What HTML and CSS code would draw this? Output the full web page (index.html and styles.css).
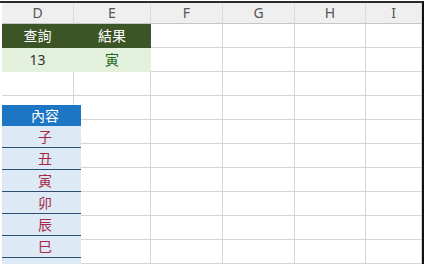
FILE: index.html
```html
<!DOCTYPE html>
<html lang="zh-Hant">
<head>
    <meta charset="UTF-8">
    <meta name="viewport" content="width=device-width, initial-scale=1.0">
    <title>地支查詢</title>
    <link rel="stylesheet" href="styles.css">
</head>
<body>
    <!-- Worksheet -->
    <div class="sheet">
        <div class="col-head">D</div>
        <div class="col-head">E</div>
        <div class="col-head">F</div>
        <div class="col-head">G</div>
        <div class="col-head">H</div>
        <div class="col-head">I</div>

        <div class="cell title">查詢</div>
        <div class="cell title">結果</div>
        <div class="cell"></div><div class="cell"></div><div class="cell"></div><div class="cell"></div>

        <div class="cell value">13</div>
        <div class="cell value result">寅</div>
        <div class="cell"></div><div class="cell"></div><div class="cell"></div><div class="cell"></div>

        <div class="cell"></div><div class="cell"></div><div class="cell"></div><div class="cell"></div><div class="cell"></div><div class="cell"></div>
        <div class="cell"></div><div class="cell"></div><div class="cell"></div><div class="cell"></div><div class="cell"></div><div class="cell"></div>
        <div class="cell"></div><div class="cell"></div><div class="cell"></div><div class="cell"></div><div class="cell"></div><div class="cell"></div>
        <div class="cell"></div><div class="cell"></div><div class="cell"></div><div class="cell"></div><div class="cell"></div><div class="cell"></div>
        <div class="cell"></div><div class="cell"></div><div class="cell"></div><div class="cell"></div><div class="cell"></div><div class="cell"></div>
        <div class="cell"></div><div class="cell"></div><div class="cell"></div><div class="cell"></div><div class="cell"></div><div class="cell"></div>
        <div class="cell"></div><div class="cell"></div><div class="cell"></div><div class="cell"></div><div class="cell"></div><div class="cell"></div>
        <div class="cell"></div><div class="cell"></div><div class="cell"></div><div class="cell"></div><div class="cell"></div><div class="cell"></div>
    </div>

    <!-- Lookup list -->
    <div class="list">
        <div class="list-head">內容</div>
        <div class="list-item">子</div>
        <div class="list-item">丑</div>
        <div class="list-item">寅</div>
        <div class="list-item">卯</div>
        <div class="list-item">辰</div>
        <div class="list-item">巳</div>
    </div>
</body>
</html>
```

FILE: styles.css
```css
/* Reset */
* {
    margin: 0;
    padding: 0;
    box-sizing: border-box;
}

body {
    font-family: 'Noto Sans', 'Noto Sans CJK TC', sans-serif;
    background: #fff;
    width: 426px;
    height: 264px;
    overflow: hidden;
    position: relative;
}

/* Worksheet grid */
.sheet {
    margin-top: 1px;
    width: 424px;
    height: 263px;
    padding-left: 2px;
    border-top: 2px solid #2a2a2a;
    border-right: 2px solid #111;
    display: grid;
    grid-template-columns: 72px 77px 72px 72px 71px 1fr;
    grid-template-rows: 21px repeat(10, 24px);
    overflow: hidden;
}

.col-head {
    background: #efefef;
    border-right: 1px solid #dcdcdc;
    border-bottom: 1px solid #c6c6c6;
    color: #555;
    font-size: 14px;
    line-height: 20px;
    text-align: center;
}

.cell {
    border-right: 1px solid #d6d6d6;
    border-bottom: 1px solid #d6d6d6;
    font-size: 14px;
    line-height: 23px;
    text-align: center;
}

.cell.title {
    background: #3c5526;
    border-color: #3c5526;
    color: #fff;
}

.cell.value {
    background: #e3f0db;
    border-color: #e3f0db;
    color: #333;
}

.cell.result {
    color: #1e6a1e;
}

/* Floating list */
.list {
    position: absolute;
    left: 2px;
    top: 105px;
    width: 79px;
    height: 159px;
    background: #dde9f5;
    overflow: hidden;
}

.list-head {
    background: #1c76c4;
    color: #fff;
    font-size: 14px;
    height: 21px;
    line-height: 21px;
    padding-left: 7px;
    text-align: center;
}

.list-item {
    height: 22px;
    line-height: 21px;
    border-bottom: 1px solid #2d4d73;
    color: #a62a46;
    font-size: 14px;
    padding-left: 7px;
    text-align: center;
}
```
